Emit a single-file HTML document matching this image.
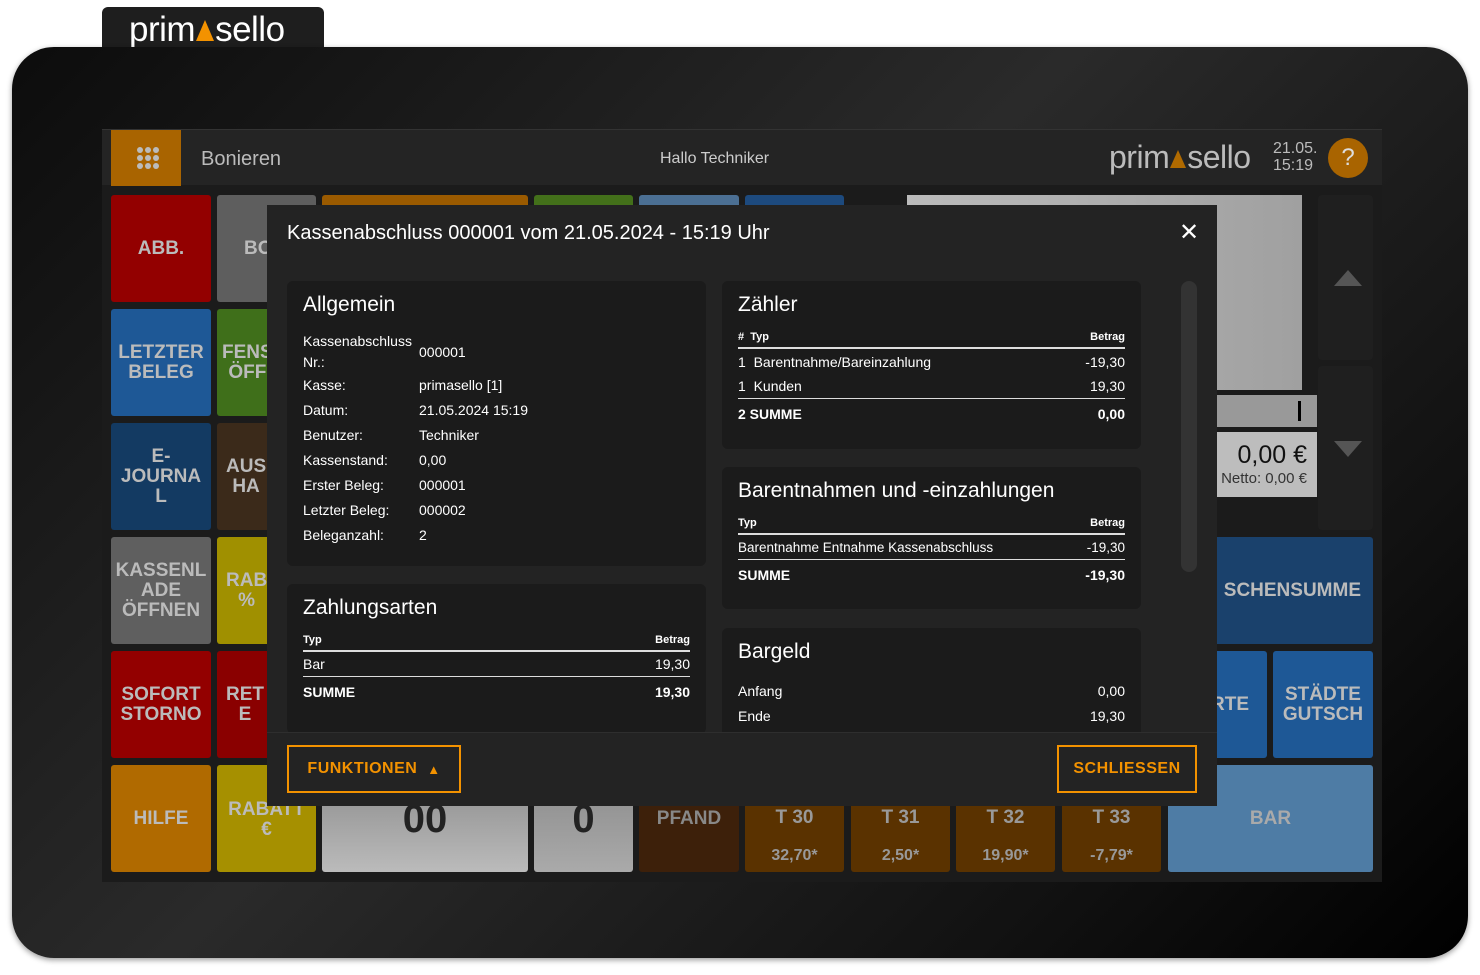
<!DOCTYPE html>
<html><head><meta charset="utf-8">
<style>
*{box-sizing:border-box;margin:0;padding:0}
body{width:1480px;height:975px;background:#fff;font-family:"Liberation Sans",sans-serif;position:relative;overflow:hidden}
.abs{position:absolute}
.tab{left:102px;top:7px;width:222px;height:44px;background:#1e1e1e;border-radius:6px 6px 0 0}
.logo{color:#fff;white-space:nowrap;letter-spacing:-0.5px}
.tri{display:inline-block;width:0;height:0;border-left:9px solid transparent;border-right:9px solid transparent;border-bottom:20px solid #f39200;margin:0 1px}
.dev{left:12px;top:47px;width:1456px;height:911px;border-radius:42px;background:linear-gradient(135deg,#0c0c0c 0%,#2a2a2a 45%,#111 80%,#000 100%);box-shadow:0 2px 6px rgba(0,0,0,.4)}
.scr{left:102px;top:129px;width:1280px;height:753px;background:#1b1b1b}
.hdr{left:102px;top:129px;width:1280px;height:56px;background:#242424;border-top:1px solid #333}
.t{position:absolute;border-radius:3px;color:#bbb;font-weight:bold;font-size:19px;display:flex;align-items:center;justify-content:center;text-align:center;line-height:20px}
.tt{flex-direction:column;justify-content:flex-start;padding-top:43px;color:#999}
.tt span{font-size:16px;margin-top:18px}
.modal{left:267px;top:205px;width:950px;height:601px;background:#232323;color:#fff}
.card{position:absolute;background:#1b1b1b;border-radius:6px;padding:12px 16px;font-size:14px}
.card h3{font-weight:normal;font-size:21px;margin-bottom:14px}
.row{display:flex;justify-content:space-between;height:25px;align-items:center}
.th{font-size:11px;font-weight:bold;display:flex;justify-content:space-between;border-bottom:2px solid #ddd;padding-bottom:4px}
.b{font-weight:bold}
.line{border-bottom:1px solid #ddd}
.btn{position:absolute;border:2px solid #f39200;color:#f39200;font-weight:bold;font-size:16px;display:flex;align-items:center;justify-content:center;letter-spacing:.5px}
</style></head><body>
<div class="abs tab"><div class="abs logo" style="left:27px;top:3px;font-size:35px">prim<span class="tri" style="border-width:0 9px 21px 9px;border-color:transparent transparent #f39200"></span>sello</div></div>
<div class="abs dev"></div>
<div class="abs scr"></div>
<div class="abs hdr">
 <div class="abs" style="left:9px;top:0;width:70px;height:56px;background:#a96400;display:grid;grid-template-columns:repeat(3,6px);gap:2px;padding:17px 0 0 26px;align-content:start">
  <i style="width:6px;height:6px;border-radius:50%;background:#bbb"></i><i style="width:6px;height:6px;border-radius:50%;background:#bbb"></i><i style="width:6px;height:6px;border-radius:50%;background:#bbb"></i><i style="width:6px;height:6px;border-radius:50%;background:#bbb"></i><i style="width:6px;height:6px;border-radius:50%;background:#bbb"></i><i style="width:6px;height:6px;border-radius:50%;background:#bbb"></i><i style="width:6px;height:6px;border-radius:50%;background:#bbb"></i><i style="width:6px;height:6px;border-radius:50%;background:#bbb"></i><i style="width:6px;height:6px;border-radius:50%;background:#bbb"></i>
 </div>
 <div class="abs" style="left:99px;top:18px;font-size:20px;color:#bbb">Bonieren</div>
 <div class="abs" style="left:558px;top:20px;font-size:16px;color:#ccc">Hallo Techniker</div>
 <div class="abs logo" style="left:1007px;top:9px;font-size:32px;color:#bbb">prim<span class="tri" style="border-width:0 8px 18px 8px;border-color:transparent transparent #b06a00"></span>sello</div>
 <div class="abs" style="left:1171px;top:10px;font-size:16px;color:#bbb;line-height:17px">21.05.<br>15:19</div>
 <div class="abs" style="left:1226px;top:8px;width:40px;height:40px;border-radius:50%;background:#a96400;color:#ddd;font-size:24px;text-align:center;line-height:40px">?</div>
</div>

<!-- tiles -->
<div class="t" style="left:111px;top:195px;width:100px;height:107px;background:#930000">ABB.</div>
<div class="t" style="left:217px;top:195px;width:99px;height:107px;background:#5e5e5e;justify-content:flex-start;padding-left:27px">BO</div>
<div class="t" style="left:322px;top:195px;width:206px;height:107px;background:#9a5a00"></div>
<div class="t" style="left:534px;top:195px;width:99px;height:107px;background:#43701a"></div>
<div class="t" style="left:639px;top:195px;width:100px;height:107px;background:#4b6f93"></div>
<div class="t" style="left:745px;top:195px;width:99px;height:107px;background:#1d4a7e"></div>
<div class="abs" style="left:907px;top:195px;width:395px;height:195px;background:linear-gradient(90deg,#bbb,#a0a0a0)"></div>
<div class="abs" style="left:907px;top:395px;width:410px;height:32px;background:#999"><div class="abs" style="left:391px;top:6px;width:3px;height:20px;background:#000"></div></div>
<div class="abs" style="left:907px;top:432px;width:410px;height:65px;background:#bdbdbd;color:#111;text-align:right;padding-right:10px"><div style="font-size:25px;margin-top:9px">0,00 €</div><div style="font-size:15px;color:#333">Netto: 0,00 €</div></div>
<div class="abs" style="left:1318px;top:195px;width:55px;height:165px;background:#1f1f1f;border-radius:4px"></div>
<div class="abs" style="left:1318px;top:366px;width:55px;height:164px;background:#1f1f1f;border-radius:4px"></div>
<div class="abs" style="left:1334px;top:270px;border:14px solid transparent;border-bottom:16px solid #555;border-top:0"></div>
<div class="abs" style="left:1334px;top:441px;border:14px solid transparent;border-top:16px solid #555;border-bottom:0"></div>

<div class="t" style="left:111px;top:309px;width:100px;height:107px;background:#1e5896">LETZTER<br>BELEG</div>
<div class="t" style="left:217px;top:309px;width:99px;height:107px;background:#3f6f1a;justify-content:flex-start;padding-left:5px">FENS<br>ÖFF</div>
<div class="t" style="left:111px;top:423px;width:100px;height:107px;background:#133a62">E-<br>JOURNA<br>L</div>
<div class="t" style="left:217px;top:423px;width:99px;height:107px;background:#3b2a1a;justify-content:flex-start;padding-left:9px">AUS<br>HA</div>
<div class="t" style="left:111px;top:537px;width:100px;height:107px;background:#5f5f5f">KASSENL<br>ADE<br>ÖFFNEN</div>
<div class="t" style="left:217px;top:537px;width:99px;height:107px;background:#a09000;justify-content:flex-start;padding-left:9px">RAB<br>%</div>
<div class="t" style="left:1062px;top:537px;width:311px;height:107px;background:#1a416c;justify-content:flex-end;padding-right:12px">SCHENSUMME</div>
<div class="t" style="left:111px;top:651px;width:100px;height:107px;background:#930000">SOFORT<br>STORNO</div>
<div class="t" style="left:217px;top:651px;width:99px;height:107px;background:#8a0000;justify-content:flex-start;padding-left:9px">RET<br>E</div>
<div class="t" style="left:1168px;top:651px;width:99px;height:107px;background:#1e5896;justify-content:flex-end;padding-right:18px">RTE</div>
<div class="t" style="left:1273px;top:651px;width:100px;height:107px;background:#1e5896">STÄDTE<br>GUTSCH</div>
<div class="t" style="left:111px;top:765px;width:100px;height:107px;background:#b06a00">HILFE</div>
<div class="t" style="left:217px;top:765px;width:99px;height:107px;background:#a69000;align-items:flex-start;padding-top:35px">RABATT<br>€</div>
<div class="t" style="left:322px;top:765px;width:206px;height:107px;background:linear-gradient(#888,#bbb);color:#222;font-size:40px">00</div>
<div class="t" style="left:534px;top:765px;width:99px;height:107px;background:linear-gradient(#888,#aaa);color:#222;font-size:40px">0</div>
<div class="t" style="left:639px;top:765px;width:100px;height:107px;background:#3d200a;color:#888;align-items:flex-start;padding-top:44px">PFAND</div>
<div class="t tt" style="left:745px;top:765px;width:99px;height:107px;background:#5a3200">T 30<span>32,70*</span></div>
<div class="t tt" style="left:851px;top:765px;width:99px;height:107px;background:#5a3200">T 31<span>2,50*</span></div>
<div class="t tt" style="left:956px;top:765px;width:99px;height:107px;background:#5a3200">T 32<span>19,90*</span></div>
<div class="t tt" style="left:1062px;top:765px;width:99px;height:107px;background:#5a3200">T 33<span>-7,79*</span></div>
<div class="t" style="left:1168px;top:765px;width:205px;height:107px;background:#4e7ca5;color:#aaa">BAR</div>

<!-- modal -->
<div class="abs modal">
 <div class="abs" style="left:20px;top:17px;font-size:20px">Kassenabschluss 000001 vom 21.05.2024 - 15:19 Uhr</div>
 <div class="abs" style="left:912px;top:13px;font-size:24px">&#x2715;</div>
 <div class="abs" style="left:0;top:60px;width:950px;height:467px;overflow:hidden">
  <div class="card" style="left:20px;top:16px;width:419px;height:285px">
   <h3>Allgemein</h3>
   <div style="display:grid;grid-template-columns:116px 1fr;row-gap:0;line-height:25px">
    <div style="line-height:21px">Kassenabschluss Nr.:</div><div style="align-self:center">000001</div>
    <div>Kasse:</div><div>primasello [1]</div>
    <div>Datum:</div><div>21.05.2024 15:19</div>
    <div>Benutzer:</div><div>Techniker</div>
    <div>Kassenstand:</div><div>0,00</div>
    <div>Erster Beleg:</div><div>000001</div>
    <div>Letzter Beleg:</div><div>000002</div>
    <div>Beleganzahl:</div><div>2</div>
   </div>
  </div>
  <div class="card" style="left:20px;top:319px;width:419px;height:150px">
   <h3>Zahlungsarten</h3>
   <div class="th"><span>Typ</span><span>Betrag</span></div>
   <div class="row line"><span>Bar</span><span>19,30</span></div>
   <div class="row b" style="height:30px"><span>SUMME</span><span>19,30</span></div>
  </div>
  <div class="card" style="left:455px;top:16px;width:419px;height:168px">
   <h3>Zähler</h3>
   <div class="th"><span># &nbsp;Typ</span><span>Betrag</span></div>
   <div class="row"><span>1 &nbsp;Barentnahme/Bareinzahlung</span><span>-19,30</span></div>
   <div class="row line"><span>1 &nbsp;Kunden</span><span>19,30</span></div>
   <div class="row b" style="height:30px"><span>2 SUMME</span><span>0,00</span></div>
  </div>
  <div class="card" style="left:455px;top:202px;width:419px;height:142px">
   <h3>Barentnahmen und -einzahlungen</h3>
   <div class="th"><span>Typ</span><span>Betrag</span></div>
   <div class="row line" style="font-size:13.5px"><span>Barentnahme Entnahme Kassenabschluss</span><span>-19,30</span></div>
   <div class="row b" style="height:30px"><span>SUMME</span><span>-19,30</span></div>
  </div>
  <div class="card" style="left:455px;top:363px;width:419px;height:140px">
   <h3>Bargeld</h3>
   <div class="row"><span>Anfang</span><span>0,00</span></div>
   <div class="row"><span>Ende</span><span>19,30</span></div>
  </div>
  <div class="abs" style="left:914px;top:16px;width:16px;height:291px;background:#333;border-radius:8px"></div>
 </div>
 <div class="abs" style="left:0;top:527px;width:950px;height:74px;background:#232323;border-top:1px solid #2e2e2e"></div>
 <div class="btn" style="left:20px;top:540px;width:174px;height:48px">FUNKTIONEN&nbsp;&nbsp;<span style="font-size:13px">&#9650;</span></div>
 <div class="btn" style="left:790px;top:540px;width:140px;height:48px">SCHLIESSEN</div>
</div>
</body></html>
